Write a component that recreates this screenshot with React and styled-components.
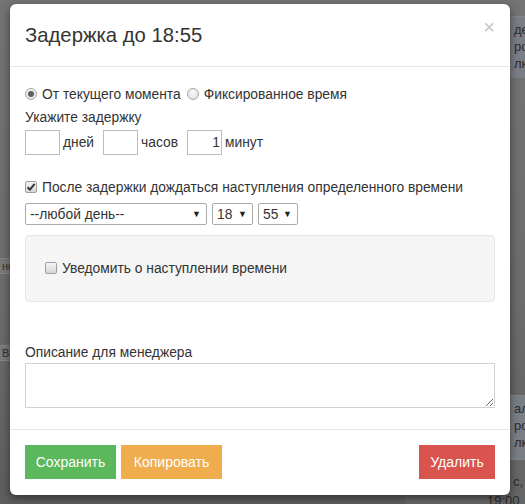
import React from "react";
import styled, { createGlobalStyle } from "styled-components";

const Global = createGlobalStyle`
  html, body { margin: 0; padding: 0; background: #6a6a6a; }
  body { font-family: "Liberation Sans", Arial, sans-serif; }
  * { box-sizing: border-box; }
`;

const Page = styled.div`
  position: relative;
  width: 525px;
  height: 504px;
  overflow: hidden;
  background: linear-gradient(to bottom, #747474 0%, #6c6c6c 60%, #5e5e5e 100%);
  padding: 4px 0 0 10px;
`;

const BgCard = styled.div`
  position: absolute;
  left: ${(p) => p.x}px;
  top: ${(p) => p.y}px;
  width: ${(p) => p.w}px;
  height: ${(p) => p.h}px;
  background: ${(p) => p.bg || "#7a7e85"};
  border-top: 1px solid #858585;
  color: #2b2b2b;
  font-size: 13px;
  line-height: ${(p) => p.lh || 17}px;
  padding: ${(p) => p.pt || 4}px 0 0 4px;
  white-space: nowrap;
  overflow: hidden;
`;

const BgTag = styled.div`
  position: absolute;
  left: ${(p) => p.x}px;
  top: ${(p) => p.y}px;
  padding: 1px 3px;
  background: #7a7a7a;
  border: 1px solid #858585;
  color: #2e2e2e;
  font-size: 11px;
`;

const Modal = styled.div`
  position: relative;
  width: 500px;
  height: 491px;
  background: #fff;
  border-radius: 6px;
  box-shadow: 0 3px 9px rgba(0, 0, 0, 0.5);
  display: flex;
  flex-direction: column;
  color: #333;
  font-size: 13.8px;
`;

const Header = styled.div`
  height: 63px;
  padding: 0 15px;
  border-bottom: 1px solid #e5e5e5;
  display: flex;
  align-items: center;
  justify-content: space-between;
`;

const Title = styled.h4`
  margin: 0;
  font-size: 20.3px;
  font-weight: 400;
  color: #333;
`;

const Close = styled.span`
  color: #c4c4c4;
  font-size: 20px;
  line-height: 1;
  margin-top: -16px;
  margin-right: 0px;
`;

const Body = styled.div`
  padding: 17px 15px 21px 15px;
  display: flex;
  flex-direction: column;
`;

const Row = styled.div`
  display: flex;
  align-items: center;
  height: ${(p) => p.h || 20}px;
  margin-top: ${(p) => p.mt || 0}px;
  gap: ${(p) => p.gap || 0}px;
`;

const Option = styled.label`
  display: flex;
  align-items: center;
  gap: 5px;
  margin-right: 6px;
  white-space: nowrap;
`;

const Radio = styled.span`
  width: 12px;
  height: 12px;
  border-radius: 50%;
  border: 1px solid #a8a8a8;
  background: radial-gradient(circle at 50% 35%, #fafafa, #dcdcdc);
  display: inline-flex;
  align-items: center;
  justify-content: center;
  &::after {
    content: "";
    width: 6px;
    height: 6px;
    border-radius: 50%;
    background: ${(p) => (p.checked ? "#5f5f5f" : "transparent")};
  }
`;

const Check = styled.span`
  width: 12px;
  height: 12px;
  border-radius: 2px;
  border: 1px solid #9e9e9e;
  background: linear-gradient(#f6f6f6, #d6d6d6);
  display: inline-flex;
  align-items: center;
  justify-content: center;
  flex: none;
`;

const Label = styled.div`
  line-height: 18px;
  margin-top: ${(p) => p.mt || 0}px;
`;

const NumInput = styled.div`
  width: 35px;
  height: 25px;
  border: 1px solid #bdbdbd;
  text-align: right;
  padding-right: 1px;
  line-height: 23px;
`;

const Unit = styled.span`
  margin: 0 9px 0 3px;
`;

const Select = styled.div`
  width: ${(p) => p.w}px;
  height: 22px;
  border: 1px solid #a9a9a9;
  border-radius: 2px;
  display: flex;
  align-items: center;
  justify-content: space-between;
  padding: 0 5px 0 4px;
`;

const Arrow = styled.span`
  font-size: 9px;
  color: #222;
`;

const Well = styled.div`
  margin-top: 10px;
  height: 67px;
  background: #f5f5f5;
  border: 1px solid #e6e6e6;
  border-radius: 4px;
  display: flex;
  align-items: center;
  padding: 0 0 1px 19px;
`;

const TextArea = styled.textarea`
  margin-top: 1px;
  width: 470px;
  height: 45px;
  border: 1px solid #d2d2d2;
  resize: vertical;
  font-family: inherit;
  outline: none;
`;

const Footer = styled.div`
  border-top: 1px solid #e5e5e5;
  padding: 15px 15px 0 15px;
  display: flex;
  gap: 5px;
`;

const Button = styled.button`
  height: 34px;
  width: ${(p) => p.w}px;
  border: none;
  border-radius: 0;
  background: ${(p) => p.bg};
  color: #fff;
  font-family: inherit;
  font-size: 14px;
  padding: 0;
  margin-left: ${(p) => (p.push ? "auto" : "0")};
`;

const Indent = styled.span`
  margin-left: ${(p) => p.l}px;
`;

function CheckMark() {
  return (
    <svg width="10" height="10" viewBox="0 0 10 10">
      <path d="M1.5 5.2 L4 7.6 L8.6 1.8" fill="none" stroke="#333" strokeWidth="2" />
    </svg>
  );
}

export default function App() {
  return (
    <>
      <Global />
      <Page>
        <BgCard x={510} y={16} w={15} h={62}>де<br />ро<br />лк</BgCard>
        <BgCard x={510} y={395} w={15} h={64}>ал<br />ро<br />лк</BgCard>
        <BgCard x={405} y={459} w={120} h={45} bg="#666666" pt={12} lh={19}>
          <Indent l={104}>с,</Indent>
          <br />
          <Indent l={78}>19:00</Indent>
        </BgCard>
        <BgTag x={-2} y={258}>но</BgTag>
        <BgTag x={-2} y={345}>Вы</BgTag>
        <Modal>
          <Header>
            <Title>Задержка до 18:55</Title>
            <Close>×</Close>
          </Header>
          <Body>
            <Row>
              <Option><Radio checked />От текущего момента</Option>
              <Option><Radio />Фиксированное время</Option>
            </Row>
            <Label mt={5}>Укажите задержку</Label>
            <Row h={25} mt={3}>
              <NumInput />
              <Unit>дней</Unit>
              <NumInput />
              <Unit>часов</Unit>
              <NumInput>1</NumInput>
              <Unit>минут</Unit>
            </Row>
            <Row mt={22}>
              <Option><Check><CheckMark /></Check>После задержки дождаться наступления определенного времени</Option>
            </Row>
            <Row h={22} mt={6} gap={5}>
              <Select w={182}><span>--любой день--</span><Arrow>▼</Arrow></Select>
              <Select w={41}><span>18</span><Arrow>▼</Arrow></Select>
              <Select w={40}><span>55</span><Arrow>▼</Arrow></Select>
            </Row>
            <Well>
              <Option><Check />Уведомить о наступлении времени</Option>
            </Well>
            <Label mt={42}>Описание для менеджера</Label>
            <TextArea />
          </Body>
          <Footer>
            <Button bg="#5cb85c" w={91}>Сохранить</Button>
            <Button bg="#f0ad4e" w={101}>Копировать</Button>
            <Button bg="#d9534f" w={76} push>Удалить</Button>
          </Footer>
        </Modal>
      </Page>
    </>
  );
}
